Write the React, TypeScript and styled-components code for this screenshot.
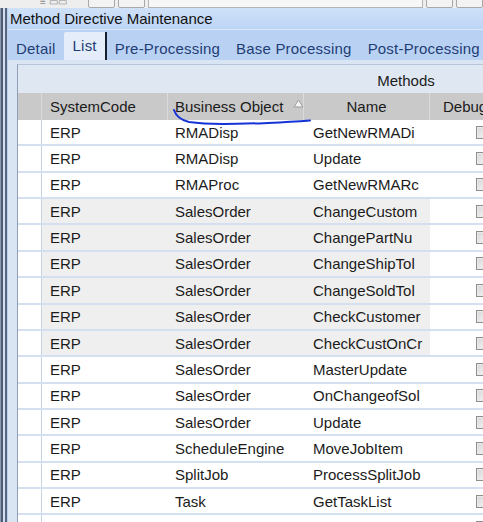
import React from 'react';
import styled, { createGlobalStyle } from 'styled-components';

const GlobalStyle = createGlobalStyle`
  html, body {
    margin: 0;
    padding: 0;
    width: 483px;
    height: 522px;
    overflow: hidden;
    background: #ffffff;
  }
  body {
    font-family: "Liberation Sans", Arial, sans-serif;
  }
`;

// column widths, in page px
const SEL = 24;
const SYS = 126;
const BO = 136;
const NAME = 126;
const DEBUG = 80;
const COLS = `${SEL}px ${SYS}px ${BO}px ${NAME}px ${DEBUG}px`;

interface IRow {
    sys: string;
    bo: string;
    name: string;
    shaded?: boolean;
}

const rows: IRow[] = [
    { sys: 'ERP', bo: 'RMADisp', name: 'GetNewRMADi' },
    { sys: 'ERP', bo: 'RMADisp', name: 'Update' },
    { sys: 'ERP', bo: 'RMAProc', name: 'GetNewRMARc' },
    { sys: 'ERP', bo: 'SalesOrder', name: 'ChangeCustom', shaded: true },
    { sys: 'ERP', bo: 'SalesOrder', name: 'ChangePartNu', shaded: true },
    { sys: 'ERP', bo: 'SalesOrder', name: 'ChangeShipTol', shaded: true },
    { sys: 'ERP', bo: 'SalesOrder', name: 'ChangeSoldTol', shaded: true },
    { sys: 'ERP', bo: 'SalesOrder', name: 'CheckCustomer', shaded: true },
    { sys: 'ERP', bo: 'SalesOrder', name: 'CheckCustOnCr', shaded: true },
    { sys: 'ERP', bo: 'SalesOrder', name: 'MasterUpdate' },
    { sys: 'ERP', bo: 'SalesOrder', name: 'OnChangeofSol' },
    { sys: 'ERP', bo: 'SalesOrder', name: 'Update' },
    { sys: 'ERP', bo: 'ScheduleEngine', name: 'MoveJobItem' },
    { sys: 'ERP', bo: 'SplitJob', name: 'ProcessSplitJob' },
    { sys: 'ERP', bo: 'Task', name: 'GetTaskList' },
    { sys: 'ERP', bo: 'Task', name: 'GetTaskListForS' },
];

const tabs = ['Detail', 'List', 'Pre-Processing', 'Base Processing', 'Post-Processing'];

export default function App() {
    return (
        <>
            <GlobalStyle />
            <Toolbar>
                <ToolIcon>≡ ▭▭</ToolIcon>
                <ToolButton w={27} />
                <ToolButton w={27} />
                <ToolField />
                <ToolButton w={27} />
                <ToolButton w={27} />
            </Toolbar>
            <Window>
                <Frame />
                <Main>
                    <TitleBar>Method Directive Maintenance</TitleBar>
                    <TabStrip>
                        {tabs.map(t => (
                            <Tab key={t} selected={t === 'List'}>{t}</Tab>
                        ))}
                    </TabStrip>
                    <Content>
                        <GridWrap>
                            <GroupRow>
                                <GroupCell w={SEL + SYS + BO} />
                                <GroupCell w={204} center>Methods</GroupCell>
                            </GroupRow>
                            <HeaderRow>
                                <HeadCell />
                                <HeadCell pad={8}>SystemCode</HeadCell>
                                <HeadCell pad={7}>
                                    Business Object
                                    <SortArrow width="11" height="9" viewBox="0 0 11 9">
                                        <path d="M5.5 1 L10 8 L1 8 Z" fill="#f4f4f4" stroke="#9a9a9a" strokeWidth="1" />
                                    </SortArrow>
                                </HeadCell>
                                <HeadCell center>Name</HeadCell>
                                <HeadCell pad={13}>Debug</HeadCell>
                            </HeaderRow>
                            {rows.map((r, i) => (
                                <DataRow key={i}>
                                    <SelCell />
                                    <Cell pad={8} shaded={r.shaded}>{r.sys}</Cell>
                                    <Cell pad={7} shaded={r.shaded}>{r.bo}</Cell>
                                    <Cell pad={9} shaded={r.shaded}>{r.name}</Cell>
                                    <Cell pad={46}><Check /></Cell>
                                </DataRow>
                            ))}
                            <Scribble width="320" height="70" viewBox="0 0 320 70">
                                <path
                                    d="M156 45 C158 51 162 55 171 57 C192 60 218 59 250 58 C270 57 285 56 292 55.5"
                                    fill="none"
                                    stroke="#1533d6"
                                    strokeWidth="2"
                                    strokeLinecap="round"
                                />
                            </Scribble>
                        </GridWrap>
                    </Content>
                </Main>
            </Window>
        </>
    );
}

const Toolbar = styled.div`
    height: 8px;
    display: flex;
    align-items: flex-end;
    gap: 3px;
    padding-left: 40px;
    background: #eeeeee;
    overflow: hidden;
`;

const ToolIcon = styled.div`
    width: 45px;
    flex: none;
    overflow: hidden;
    white-space: nowrap;
    font-size: 10px;
    line-height: 9px;
    color: #8a8a8a;
    align-self: flex-start;
    margin-top: -3px;
`;

const ToolButton = styled.div<{ w: number }>`
    width: ${p => p.w}px;
    height: 20px;
    flex: none;
    box-sizing: border-box;
    border: 1px solid #a8a8a8;
    border-radius: 2px;
    background: #f3f3f3;
`;

const ToolField = styled.div`
    width: 275px;
    height: 20px;
    flex: none;
    box-sizing: border-box;
    border: 1px solid #b4b4b4;
    background: #f7f7f7;
`;

const Window = styled.div`
    display: flex;
    height: 514px;
`;

const Frame = styled.div`
    width: 8px;
    flex: none;
    background: linear-gradient(
        to right,
        #8f9bb0 0 1px,
        #4d5c75 1px 3px,
        #d3dff0 3px 5px,
        #56667f 5px 7px,
        #bcd0ea 7px 8px
    );
`;

const Main = styled.div`
    flex: 1;
    display: flex;
    flex-direction: column;
    min-width: 0;
    overflow: hidden;
`;

const TitleBar = styled.div`
    height: 22px;
    flex: none;
    box-sizing: border-box;
    padding-left: 2px;
    display: flex;
    align-items: center;
    font-size: 15px;
    color: #121212;
    background: linear-gradient(#cfe1f8, #bcd4f4);
    border-bottom: 1px solid #dce8f8;
    white-space: nowrap;
`;

const TabStrip = styled.div`
    height: 30px;
    flex: none;
    display: flex;
    align-items: flex-end;
    background: #b9d2f3;
    white-space: nowrap;
`;

const Tab = styled.div<{ selected?: boolean }>`
    box-sizing: border-box;
    height: ${p => (p.selected ? 28 : 30)}px;
    padding: ${p => (p.selected ? '0 8px 2px 9px' : '6px 8px 0')};
    display: flex;
    align-items: center;
    font-size: 15px;
    letter-spacing: 0.2px;
    color: #1f3d75;
    background: ${p => (p.selected ? '#e4edf9' : 'transparent')};
    border-right: ${p => (p.selected ? '2px solid #18202e' : 'none')};
    border-top-left-radius: ${p => (p.selected ? '2px' : '0')};
`;

const Content = styled.div`
    flex: 1;
    padding: 4px 0 0 9px;
    background: #dae5f3;
    overflow: hidden;
`;

const GridWrap = styled.div`
    position: relative;
    background: #ffffff;
    border-left: 1px solid #8f9eb6;
    border-top: 1px solid #b7c5d9;
    height: 100%;
    font-size: 15px;
    color: #1b1b1b;
`;

const GroupRow = styled.div`
    display: flex;
    height: 28px;
    background: #dfe7f2;
`;

const GroupCell = styled.div<{ w: number; center?: boolean }>`
    width: ${p => p.w}px;
    flex: none;
    display: flex;
    align-items: center;
    justify-content: ${p => (p.center ? 'center' : 'flex-start')};
    padding-top: 2px;
    box-sizing: border-box;
`;

const HeaderRow = styled.div`
    display: grid;
    grid-template-columns: ${COLS};
    height: 27px;
    background: #c9c9c9;
`;

const HeadCell = styled.div<{ pad?: number; center?: boolean }>`
    display: flex;
    align-items: center;
    justify-content: ${p => (p.center ? 'center' : 'flex-start')};
    padding-left: ${p => p.pad ?? 0}px;
    border-right: 1px solid #dadada;
    white-space: nowrap;
    overflow: hidden;
`;

const SortArrow = styled.svg`
    margin-left: 10px;
    margin-top: -6px;
    flex: none;
`;

const DataRow = styled.div`
    display: grid;
    grid-template-columns: ${COLS};
    height: 26.36px;
    box-sizing: border-box;
    border-bottom: 2px solid #d4e0f0;
`;

const SelCell = styled.div`
    border-right: 1px solid #c6d3e5;
    background: #ffffff;
`;

const Cell = styled.div<{ pad: number; shaded?: boolean }>`
    display: flex;
    align-items: center;
    padding-left: ${p => p.pad}px;
    background: ${p => (p.shaded ? '#efefef' : '#ffffff')};
    white-space: nowrap;
    overflow: hidden;
`;

const Check = styled.div`
    width: 13px;
    height: 13px;
    flex: none;
    box-sizing: border-box;
    border: 1px solid #8e8e8e;
    background: linear-gradient(135deg, #d6d6d6, #f7f7f7);
    box-shadow: inset 0 0 0 1px #eaeaea;
`;

const Scribble = styled.svg`
    position: absolute;
    left: 0;
    top: 0;
    pointer-events: none;
`;
